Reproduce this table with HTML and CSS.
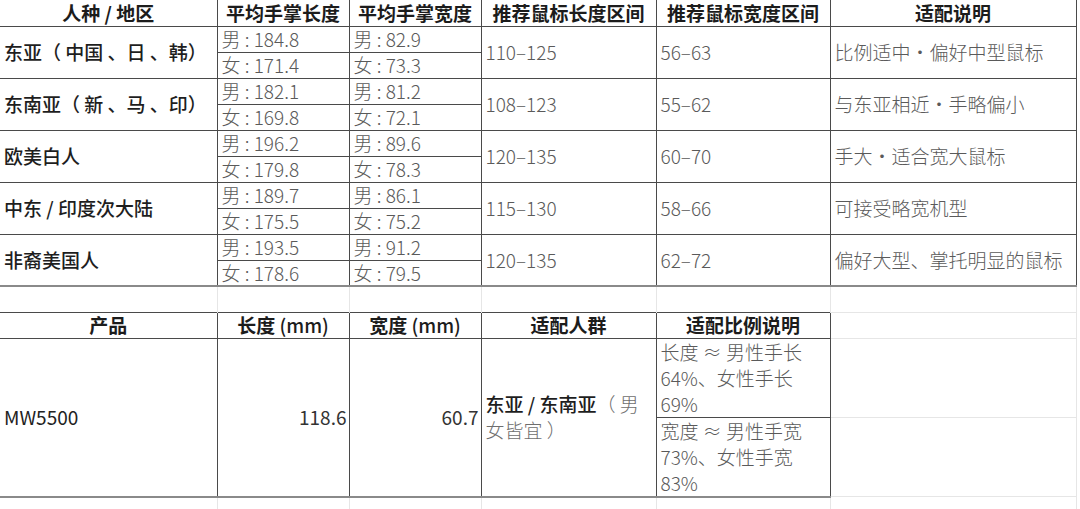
FILE: index.html
```html
<!DOCTYPE html>
<html lang="zh-CN">
<head>
<meta charset="utf-8">
<title>鼠标适配表</title>
<link rel="stylesheet" href="styles.css">
</head>
<body>
<table class="sheet">
  <colgroup>
    <col class="c1"><col class="c2"><col class="c3"><col class="c4"><col class="c5"><col class="c6">
  </colgroup>
  <tbody>
    <tr class="hd top">
      <th class="first">人种 / 地区</th><th>平均手掌长度</th><th>平均手掌宽度</th><th>推荐鼠标长度区间</th><th>推荐鼠标宽度区间</th><th>适配说明</th>
    </tr>
    <tr class="sub">
      <td rowspan="2" class="first region">东亚（ 中国 、日 、韩）</td><td class="num">男 : 184.8</td><td class="num">男 : 82.9</td>
      <td rowspan="2" class="num">110–125</td><td rowspan="2" class="num">56–63</td><td rowspan="2" class="num">比例适中·偏好中型鼠标</td>
    </tr>
    <tr class="sub"><td class="num">女 : 171.4</td><td class="num">女 : 73.3</td></tr>
    <tr class="sub">
      <td rowspan="2" class="first region">东南亚（ 新 、马 、印）</td><td class="num">男 : 182.1</td><td class="num">男 : 81.2</td>
      <td rowspan="2" class="num">108–123</td><td rowspan="2" class="num">55–62</td><td rowspan="2" class="num">与东亚相近·手略偏小</td>
    </tr>
    <tr class="sub"><td class="num">女 : 169.8</td><td class="num">女 : 72.1</td></tr>
    <tr class="sub">
      <td rowspan="2" class="first region">欧美白人</td><td class="num">男 : 196.2</td><td class="num">男 : 89.6</td>
      <td rowspan="2" class="num">120–135</td><td rowspan="2" class="num">60–70</td><td rowspan="2" class="num">手大·适合宽大鼠标</td>
    </tr>
    <tr class="sub"><td class="num">女 : 179.8</td><td class="num">女 : 78.3</td></tr>
    <tr class="sub">
      <td rowspan="2" class="first region">中东 / 印度次大陆</td><td class="num">男 : 189.7</td><td class="num">男 : 86.1</td>
      <td rowspan="2" class="num">115–130</td><td rowspan="2" class="num">58–66</td><td rowspan="2" class="num">可接受略宽机型</td>
    </tr>
    <tr class="sub"><td class="num">女 : 175.5</td><td class="num">女 : 75.2</td></tr>
    <tr class="sub">
      <td rowspan="2" class="first region">非裔美国人</td><td class="num">男 : 193.5</td><td class="num">男 : 91.2</td>
      <td rowspan="2" class="num">120–135</td><td rowspan="2" class="num">62–72</td><td rowspan="2" class="num">偏好大型、掌托明显的鼠标</td>
    </tr>
    <tr class="sub"><td class="num">女 : 178.6</td><td class="num">女 : 79.5</td></tr>

    <tr class="gap">
      <td class="first blank"></td><td class="blank"></td><td class="blank"></td><td class="blank"></td><td class="blank"></td><td class="blank outer"></td>
    </tr>

    <tr class="hd">
      <th class="first">产品</th><th>长度 <span class="unit">(mm)</span></th><th>宽度 <span class="unit">(mm)</span></th><th>适配人群</th><th>适配比例说明</th><td class="faint"></td>
    </tr>
    <tr class="big">
      <td rowspan="2" class="first prod">MW5500</td>
      <td rowspan="2" class="val">118.6</td>
      <td rowspan="2" class="val">60.7</td>
      <td rowspan="2" class="wrap crowd"><span class="strong">东亚 / 东南亚</span>（ 男<br>女皆宜 ）</td>
      <td class="wrap num">长度 ≈ 男性手长<br>64%、女性手长<br>69%</td>
      <td class="faint"></td>
    </tr>
    <tr class="big">
      <td class="wrap num">宽度 ≈ 男性手宽<br>73%、女性手宽<br>83%</td>
      <td class="faint"></td>
    </tr>
    <tr class="tail">
      <td class="first faint end"></td><td class="faint end"></td><td class="faint end"></td><td class="faint end"></td><td class="faint end"></td><td class="faint"></td>
    </tr>
  </tbody>
</table>
</body>
</html>
```

FILE: styles.css
```css
html, body {
  margin: 0;
  padding: 0;
  background: #ffffff;
}

body {
  font-family: "Noto Sans CJK SC", "Noto Sans", sans-serif;
  font-size: 19px;
  color: #333333;
}

.sheet {
  border-collapse: collapse;
  table-layout: fixed;
  width: 1076px;
}

.c1 { width: 217px; }
.c2 { width: 132px; }
.c3 { width: 132px; }
.c4 { width: 175px; }
.c5 { width: 174px; }
.c6 { width: 246px; }

.sheet td,
.sheet th {
  padding: 0 4px;
  line-height: 24px;
  white-space: nowrap;
  overflow: hidden;
  vertical-align: middle;
  text-align: left;
  border: 1px solid #4a4a4a;
}

.sheet .first {
  border-left: none;
}

.hd th {
  font-weight: 700;
  color: #1c1c1c;
  text-align: center;
}

.hd th .unit {
  font-weight: 500;
}

.top th {
  border-top: none;
}

tr.hd { height: 26px; }
tr.sub { height: 26px; }
tr.gap { height: 26px; }
tr.big { height: 79px; }
tr.tail { height: 14px; }

.region {
  color: #1e1e1e;
  font-weight: 500;
}

.num {
  color: #5a5a5a;
  font-weight: 300;
}

.sheet .blank {
  border-top: 2px solid #8a8a8a;
  border-right: 1px solid #e6e6e6;
  border-bottom: none;
  border-left: none;
}

.sheet .blank.outer {
  border-bottom: 1px solid #e6e6e6;
}

.sheet .faint {
  border: 1px solid #e6e6e6;
  border-left: none;
}

.sheet .end {
  border-top: 2px solid #8a8a8a;
}

.prod {
  color: #222222;
}

.sheet .val {
  color: #333333;
  text-align: right;
  padding-right: 2px;
}

.sheet .wrap {
  white-space: normal;
  line-height: 26px;
}

.crowd {
  color: #6e6e6e;
  font-weight: 300;
}

.crowd .strong {
  color: #1e1e1e;
  font-weight: 500;
}
```
